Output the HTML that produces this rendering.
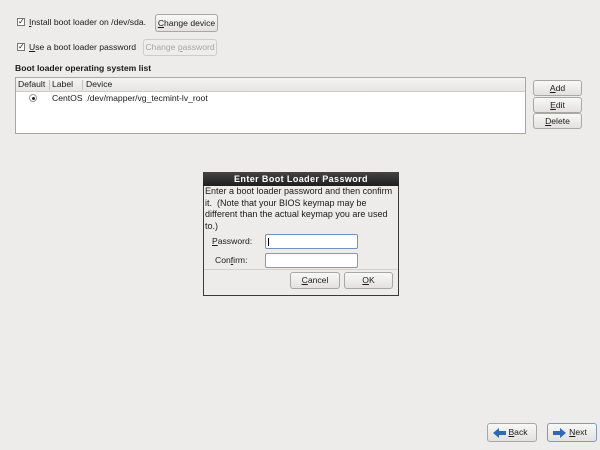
<!DOCTYPE html><html><head><style>
*{margin:0;padding:0;box-sizing:border-box}
body{width:600px;height:450px;background:#edeceb;font-family:"Liberation Sans",sans-serif;font-size:8.6px;color:#1a1a1a;position:relative;overflow:hidden}
.a{position:absolute;white-space:nowrap}
.btn{position:absolute;border:1px solid #a9a7a3;border-radius:3px;background:linear-gradient(#f8f8f7,#e2e1df);text-align:center;color:#1a1a1a;white-space:nowrap}
.cb{position:absolute;width:8px;height:8px;border:1px solid #777;background:#fff;font-size:8px;line-height:6px;text-align:center}
u{text-decoration:underline}
.inp{position:absolute;background:#fff;border:1px solid #9a9894;border-radius:2px}
</style></head><body>
<div class="cb" style="left:17px;top:18px">✓</div>
<div class="a" style="left:29px;top:17px"><u>I</u>nstall boot loader on /dev/sda.</div>
<div class="btn" style="left:155px;top:14px;width:63px;height:18px;line-height:16px"><u>C</u>hange device</div>
<div class="cb" style="left:17px;top:43px">✓</div>
<div class="a" style="left:29px;top:42px"><u>U</u>se a boot loader password</div>
<div class="btn" style="left:143px;top:39px;width:74px;height:17px;line-height:15px;color:#a8a6a2;border-color:#cfcdc9;background:#eeedec">Change <u>p</u>assword</div>
<div class="a" style="left:15px;top:63px;font-weight:bold">Boot loader operating system list</div>
<div style="position:absolute;left:15px;top:77px;width:511px;height:57px;background:#fff;border:1px solid #a9a7a3"></div>
<div style="position:absolute;left:16px;top:78px;width:509px;height:14px;background:linear-gradient(#f4f4f3,#e6e5e3);border-bottom:1px solid #cfcdc9"></div>
<div style="position:absolute;left:49px;top:80px;width:1px;height:10px;background:#c4c2be"></div>
<div style="position:absolute;left:82px;top:80px;width:1px;height:10px;background:#c4c2be"></div>
<div class="a" style="left:18px;top:79px">Default</div>
<div class="a" style="left:52px;top:79px">Label</div>
<div class="a" style="left:86px;top:79px">Device</div>
<div style="position:absolute;left:29px;top:94px;width:8px;height:8px;border-radius:50%;border:1px solid #999;background:#fff"><div style="margin:1.5px;width:3px;height:3px;border-radius:50%;background:#222"></div></div>
<div class="a" style="left:52px;top:93px">CentOS&nbsp; /dev/mapper/vg_tecmint-lv_root</div>
<div class="btn" style="left:533px;top:80px;width:49px;height:16px;line-height:14px"><u>A</u>dd</div>
<div class="btn" style="left:533px;top:97px;width:49px;height:16px;line-height:14px"><u>E</u>dit</div>
<div class="btn" style="left:533px;top:113px;width:49px;height:16px;line-height:14px"><u>D</u>elete</div>

<div style="position:absolute;left:203px;top:172px;width:196px;height:124px;background:#edeceb;border:1px solid #3a3a3a"></div>
<div style="position:absolute;left:203px;top:172px;width:196px;height:14px;background:linear-gradient(#444,#1e1e1e);border-radius:3px 3px 0 0;color:#fff;font-weight:bold;text-align:center;line-height:14px;letter-spacing:0.4px;font-size:9px">Enter Boot Loader Password</div>
<div class="a" style="left:205px;top:186px;line-height:11.5px;font-size:9px">Enter a boot loader password and then confirm<br>it.&nbsp; (Note that your BIOS keymap may be<br>different than the actual keymap you are used<br>to.)</div>
<div class="a" style="left:212px;top:236px"><u>P</u>assword:</div>
<div class="inp" style="left:265px;top:234px;width:93px;height:15px;border-color:#6f92c2"><div style="margin:3px 2px;width:1px;height:8px;background:#000"></div></div>
<div class="a" style="left:215px;top:255px">Con<u>f</u>irm:</div>
<div class="inp" style="left:265px;top:253px;width:93px;height:15px"></div>
<div style="position:absolute;left:204px;top:269px;width:194px;height:1px;background:#d3d1cd"></div>
<div class="btn" style="left:290px;top:272px;width:50px;height:17px;line-height:15px"><u>C</u>ancel</div>
<div class="btn" style="left:344px;top:272px;width:49px;height:17px;line-height:15px"><u>O</u>K</div>

<div class="btn" style="left:487px;top:423px;width:50px;height:19px;line-height:17px;padding-left:12px"><svg style="position:absolute;left:5px;top:4px" width="14" height="10"><path d="M0 5L6 0V3H13V7H6V10Z" fill="#2f69b5"/></svg><u>B</u>ack</div>
<div class="btn" style="left:547px;top:423px;width:50px;height:19px;line-height:17px;padding-left:12px;border-color:#7f9bc4"><svg style="position:absolute;left:5px;top:4px" width="14" height="10"><path d="M13 5L7 0V3H0V7H7V10Z" fill="#2f69b5"/></svg><u>N</u>ext</div>
</body></html>
